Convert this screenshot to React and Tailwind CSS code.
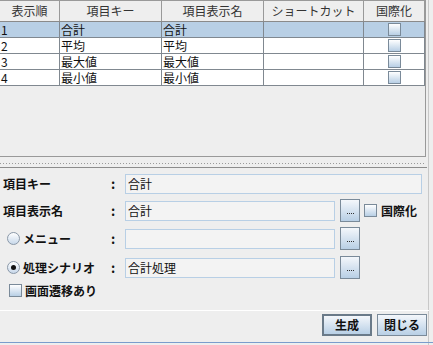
import React from "react";

const font = { fontFamily: '"Noto Sans CJK JP", "Noto Sans", sans-serif' };

function Check({ className = "" }) {
  return (
    <span
      className={
        "inline-block w-[13px] h-[13px] border border-[#7a8a99] bg-gradient-to-b from-[#ffffff] to-[#b8cfe5] " +
        className
      }
    />
  );
}

function Radio({ on }) {
  return (
    <span className="relative inline-flex w-[13px] h-[13px] rounded-full border border-[#8a98a8] bg-gradient-to-b from-[#ffffff] to-[#c8d8ea] items-center justify-center">
      {on && <span className="w-[5px] h-[5px] rounded-full bg-[#111]" />}
    </span>
  );
}

function DotsBtn() {
  return (
    <div className="w-[20px] h-[23px] border border-[#7a8a99] bg-gradient-to-b from-[#f4f7fb] to-[#b8cfe5] flex items-end justify-center pb-[7px] gap-[1px]">
      <span className="w-[1px] h-[1px] bg-[#333]" />
      <span className="w-[1px] h-[1px] bg-[#333]" />
      <span className="w-[1px] h-[1px] bg-[#333]" />
      <span className="w-[1px] h-[1px] bg-[#333]" />
    </div>
  );
}

function Field({ value, w }) {
  return (
    <div
      className={
        "h-[20px] border border-[#b8cfe5] bg-[#f3f3f3] text-[12px] leading-[18px] pl-[2px] text-[#111] " + w
      }
    >
      {value}
    </div>
  );
}

const cols = ["w-[60px]", "w-[102px]", "w-[102px]", "w-[100px]", "w-[61px]"];

export default function App() {
  const rows = [
    ["1", "合計", "合計"],
    ["2", "平均", "平均"],
    ["3", "最大値", "最大値"],
    ["4", "最小値", "最小値"],
  ];
  return (
    <div className="w-[433px] h-[345px] bg-[#eeeeee] overflow-hidden flex" style={font}>
      <div className="w-[429px] flex flex-col border-r border-[#c8c8c8]">
        {/* scroll pane */}
        <div className="h-[157px] border-t border-b border-r border-[#999999] bg-[#eeeeee] w-[426px]">
          <div className="flex h-[21px] border-b border-[#8a8a8a]">
            {["表示順", "項目キー", "項目表示名", "ショートカット", "国際化"].map((h, i) => (
              <div
                key={i}
                className={
                  cols[i] +
                  " border-r border-[#999999] text-center text-[12px] leading-[20px] text-[#333] bg-[#eeeeee]"
                }
              >
                {h}
              </div>
            ))}
          </div>
          {rows.map((r, ri) => (
            <div
              key={ri}
              className={
                "flex h-[16px] border-b border-[#808890] " + (ri === 0 ? "bg-[#b8cfe5]" : "bg-white")
              }
            >
              {[r[0], r[1], r[2], ""].map((c, ci) => (
                <div
                  key={ci}
                  className={cols[ci] + " border-r border-[#808890] text-[12px] leading-[15px] pl-[1px] text-[#111]"}
                >
                  {c}
                </div>
              ))}
              <div className={cols[4] + " border-r border-[#808890] flex items-center justify-center"}>
                <Check />
              </div>
            </div>
          ))}
        </div>
        {/* divider */}
        <div className="h-[12px] flex flex-col">
          <div className="h-[6px]" />
          <div className="h-[1px] w-[426px] bg-[repeating-linear-gradient(90deg,#9a9a9a_0px,#9a9a9a_1px,transparent_1px,transparent_3px)]" />
          <div className="h-[3px]" />
          <div className="h-[1px] w-[427px] bg-[#8c8c8c]" />
        </div>
        {/* form */}
        <div className="flex flex-col text-[12px] text-[#111]">
          <div className="flex items-center mt-[5px] h-[20px]">
            <span className="w-[111px] pl-[3px] font-bold">項目キー</span>
            <span className="w-[14px] font-bold text-[13px]">:</span>
            <Field value="合計" w="w-[297px]" />
          </div>
          <div className="flex items-center mt-[5px] h-[23px]">
            <span className="w-[111px] pl-[3px] font-bold">項目表示名</span>
            <span className="w-[14px] font-bold text-[13px]">:</span>
            <Field value="合計" w="w-[210px]" />
            <div className="ml-[5px]"><DotsBtn /></div>
            <Check className="ml-[4px]" />
            <span className="ml-[4px] font-bold">国際化</span>
          </div>
          <div className="flex items-center mt-[5px] h-[23px]">
            <span className="w-[111px] pl-[7px] flex items-center gap-[3px] font-bold">
              <Radio />
              <span>メニュー</span>
            </span>
            <span className="w-[14px] font-bold text-[13px]">:</span>
            <Field value="" w="w-[210px]" />
            <div className="ml-[5px]"><DotsBtn /></div>
          </div>
          <div className="flex items-center mt-[6px] h-[23px]">
            <span className="w-[111px] pl-[7px] flex items-center gap-[3px] font-bold">
              <Radio on />
              <span>処理シナリオ</span>
            </span>
            <span className="w-[14px] font-bold text-[13px]">:</span>
            <Field value="合計処理" w="w-[210px]" />
            <div className="ml-[5px]"><DotsBtn /></div>
          </div>
          <div className="flex items-center mt-[3px] h-[17px] pl-[9px] gap-[3px] font-bold">
            <Check />
            <span>画面遷移あり</span>
          </div>
        </div>
        <div className="mt-[11px] h-[1px] bg-white w-[429px]" />
        <div className="flex justify-end gap-[5px] mt-[3px] pr-[1px]">
          <div className="w-[50px] h-[22px] border-2 border-[#6a7a89] bg-gradient-to-b from-[#f4f7fb] to-[#b8cfe5] flex items-center justify-center text-[12px] font-bold text-[#111]">
            生成
          </div>
          <div className="w-[50px] h-[22px] border border-[#7a8a99] bg-gradient-to-b from-[#f4f7fb] to-[#b8cfe5] flex items-center justify-center text-[12px] font-bold text-[#111]">
            閉じる
          </div>
        </div>
        <div className="mt-[6px] h-[1px] bg-[#7a9ccc] w-[433px]" />
      </div>
    </div>
  );
}
